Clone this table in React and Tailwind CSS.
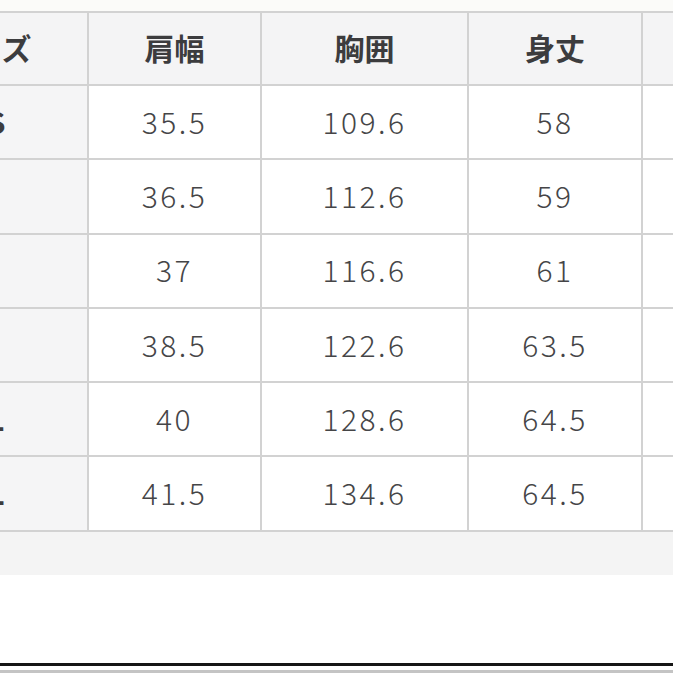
import React from "react";

const font = { fontFamily: '"Noto Sans CJK JP", "Noto Sans", sans-serif' };

const headers = ["サイズ", "肩幅", "胸囲", "身丈", "袖丈"];
const rows = [
  ["SS", "35.5", "109.6", "58", ""],
  ["S", "36.5", "112.6", "59", ""],
  ["M", "37", "116.6", "61", ""],
  ["L", "38.5", "122.6", "63.5", ""],
  ["LL", "40", "128.6", "64.5", ""],
  ["3L", "41.5", "134.6", "64.5", ""],
];

export default function App() {
  return (
    <div className="w-[673px] h-[673px] overflow-hidden bg-white flex flex-col" style={font}>
      <div className="h-[11px] bg-[#fbfbf9] shrink-0" />
      <div className="bg-[#f4f4f4] pb-[43px] shrink-0 overflow-hidden">
        <div className="ml-[-115px] w-[1000px] grid grid-cols-[200px_171px_205px_172px_200px] grid-rows-[71px_repeat(6,72.3px)] gap-[2px] p-[2px] bg-[#d2d2d2]">
          {headers.map((h) => (
            <div
              key={h}
              className="bg-[#f4f4f5] flex items-center justify-center pb-[4px] text-[30px] font-bold text-[#3c3c3e] leading-none"
            >
              {h}
            </div>
          ))}
          {rows.map((r, ri) =>
            r.map((c, ci) => (
              <div
                key={ri + "-" + ci}
                className={
                  ci === 0
                    ? "bg-[#f5f5f6] flex items-center justify-center pb-[3px] text-[30px] font-bold text-[#3c3c3e] leading-none"
                    : "bg-white flex items-center justify-center pb-[3px] text-[30px] font-light text-[#454547] tracking-[2.5px] leading-none"
                }
              >
                {c}
              </div>
            ))
          )}
        </div>
      </div>
      <div className="flex-1" />
      <div className="h-[3px] bg-[#151515] shrink-0" />
      <div className="h-[4px] bg-white shrink-0" />
      <div className="h-[3px] bg-[#c4c4c4] shrink-0" />
    </div>
  );
}
